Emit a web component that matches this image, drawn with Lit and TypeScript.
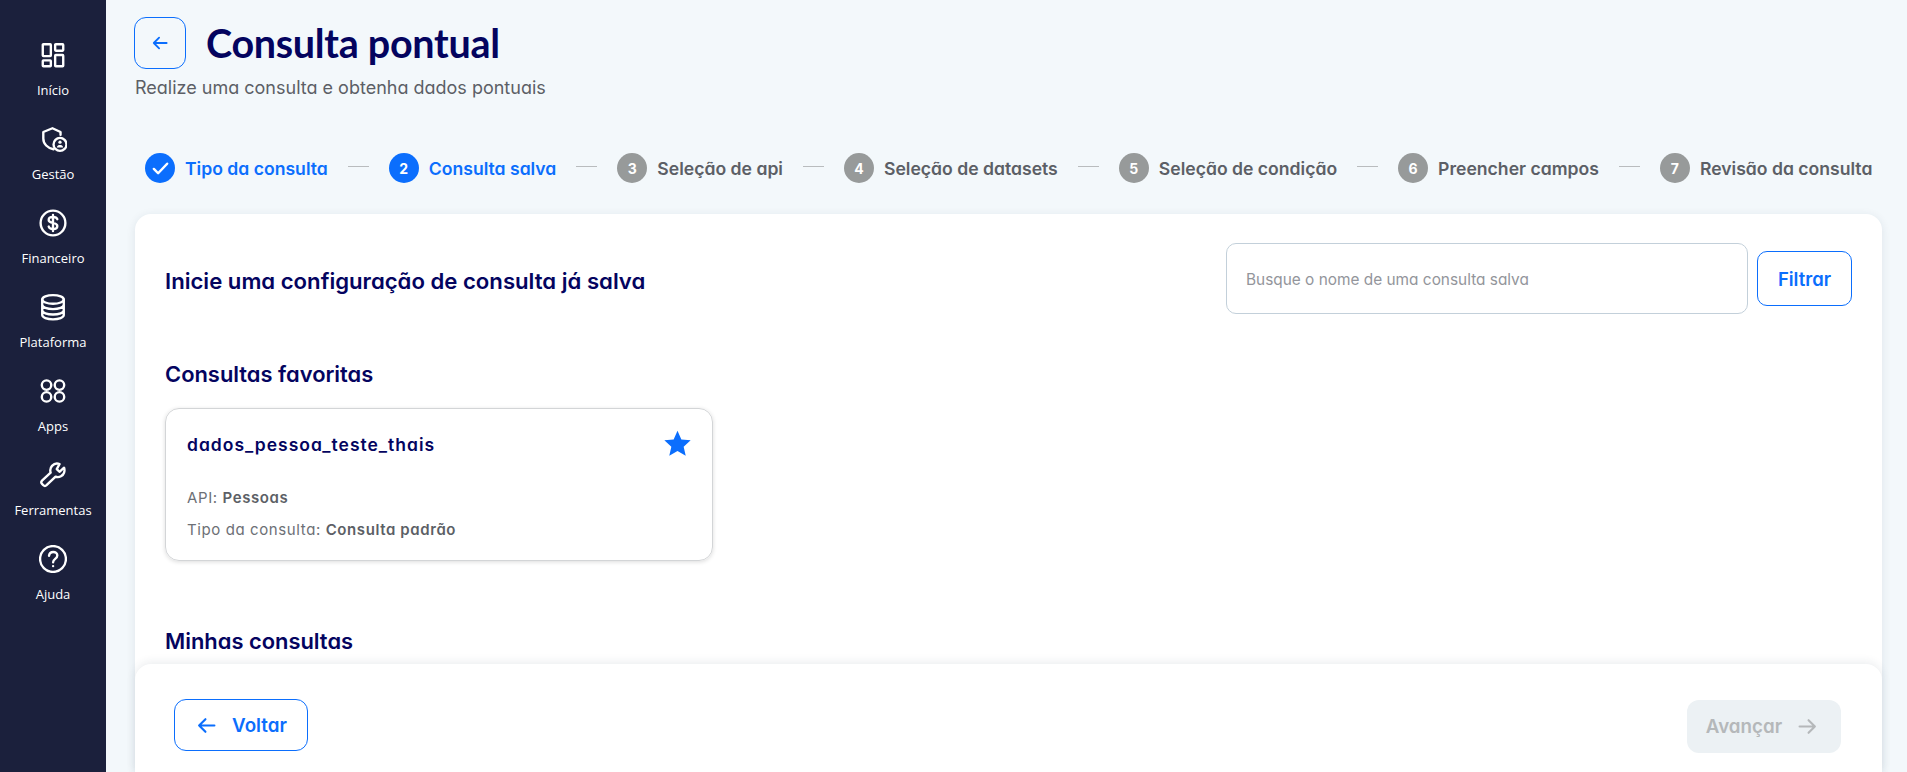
import { LitElement, html, css, svg } from "lit";
import { customElement } from "lit/decorators.js";

const icons: Record<string, unknown> = {
  home: svg`<rect x="3.500" y="3" width="7.500" height="11" rx=".6"/><rect x="15" y="3" width="7.500" height="6" rx=".6"/><rect x="3.500" y="18" width="7.500" height="5.500" rx=".6"/><rect x="15" y="13" width="7.500" height="10.500" rx=".6"/>`,
  shield: svg`<path d="M13.500 22.500C8 21.500 4 17.500 4 12.500V6.500L12.500 3l7.500 3.500V9"/><circle cx="19.500" cy="18" r="6"/><circle cx="19.500" cy="16" r="1.500" fill="currentColor" stroke="none"/><path d="M16.500 21c.5-2 1.500-2.500 3-2.500s2.500.5 3 2.500" fill="currentColor" stroke="none"/>`,
  money: svg`<circle cx="13" cy="13" r="11.500"/><path d="M17 9.500c-.5-1.500-2-2.200-4-2.200-2.300 0-4 1.100-4 2.800 0 3.800 8 1.800 8 5.600 0 1.800-1.800 2.900-4 2.900-2 0-3.600-.8-4-2.300M13 5.500v15"/>`,
  db: svg`<ellipse cx="13" cy="6" rx="10" ry="4"/><path d="M3 6v14.500c0 2.300 4.500 4 10 4s10-1.700 10-4V6M3 11c0 2.300 4.500 4 10 4s10-1.700 10-4M3 16c0 2.300 4.500 4 10 4s10-1.700 10-4"/>`,
  apps: svg`<circle cx="7" cy="7.500" r="4.400"/><circle cx="19" cy="7.500" r="4.400"/><circle cx="7" cy="18.500" r="4.400"/><circle cx="19" cy="18.500" r="4.400"/>`,
  tool: svg`<path d="M16.500 7.500l2.500 2.500 4.300-3.800c1 3.300-.2 6.600-2.900 8-2 1-3.800.8-5 .3L7 22.500c-1 1-2 1-3 0l-1.200-1.200c-1-1-1-2 0-3l8-7.500c-.6-2-.3-4.500 1.300-6.300 1.700-1.900 4.500-2.700 7-1.700z"/>`,
  help: svg`<circle cx="13" cy="13" r="12"/><path d="M9.300 10c.3-2.200 1.900-3.500 3.900-3.500 2.200 0 3.800 1.400 3.800 3.300 0 3-3.900 3.200-3.900 6.200"/><circle cx="13.100" cy="19.600" r="1.100" fill="currentColor" stroke="none"/>`,
};

const nav = [
  ["home", "Início"],
  ["shield", "Gestão"],
  ["money", "Financeiro"],
  ["db", "Plataforma"],
  ["apps", "Apps"],
  ["tool", "Ferramentas"],
  ["help", "Ajuda"],
];

const steps = [
  { n: "1", label: "Tipo da consulta", state: "done" },
  { n: "2", label: "Consulta salva", state: "active" },
  { n: "3", label: "Seleção de api", state: "" },
  { n: "4", label: "Seleção de datasets", state: "" },
  { n: "5", label: "Seleção de condição", state: "" },
  { n: "6", label: "Preencher campos", state: "" },
  { n: "7", label: "Revisão da consulta", state: "" },
];

const arrowLeft = html`<svg class="arrow" viewBox="0 0 18 18" fill="none" stroke="currentColor" stroke-width="2" stroke-linecap="round" stroke-linejoin="round"><path d="M16.500 9H2M8 3L2 9l6 6"/></svg>`;
const arrowRight = html`<svg class="arrow" viewBox="0 0 18 18" fill="none" stroke="currentColor" stroke-width="2" stroke-linecap="round" stroke-linejoin="round"><path d="M1.500 9H16M10 3l6 6-6 6"/></svg>`;

@customElement("app-root")
export class AppRoot extends LitElement {
  static styles = css`
    :host {
      display: flex;
      height: 772px;
      overflow: hidden;
      background: #f3f8fb;
      font-family: "Inter", "Liberation Sans", sans-serif;
      font-feature-settings: "cv11";
      color: #5c5f66;
    }
    .side {
      width: 106px;
      flex: none;
      background: #1b203c;
      color: #fff;
      display: flex;
      flex-direction: column;
      padding-top: 41px;
      box-sizing: border-box;
    }
    .nav {
      height: 84px;
      display: flex;
      flex-direction: column;
      align-items: center;
      gap: 12px;
    }
    .nav svg {
      width: 28px;
      height: 28px;
      fill: none;
      stroke: currentColor;
      stroke-width: 2.200;
      stroke-linecap: round;
      stroke-linejoin: round;
    }
    .nav span {
      font: 400 13px/17px "Open Sans", sans-serif;
      white-space: nowrap;
      padding-top: 1px;
    }
    .main {
      flex: 1;
      min-width: 0;
      position: relative;
      display: flex;
      flex-direction: column;
      padding: 17px 25px 0 29px;
      box-sizing: border-box;
    }
    .head {
      display: flex;
      align-items: center;
      gap: 20px;
      margin-left: -1px;
    }
    .back {
      width: 52px;
      height: 52px;
      box-sizing: border-box;
      border: 1px solid #0b6efd;
      border-radius: 12px;
      color: #0b6efd;
      display: flex;
      align-items: center;
      justify-content: center;
    }
    .back .arrow {
      width: 16px;
      height: 16px;
    }
    h1 {
      margin: 0;
      font: 700 39.500px/52px "Lato", sans-serif;
      color: #04045f;
      letter-spacing: -0.3px;
    }
    .sub {
      margin: 6px 0 0;
      font-size: 18px;
      line-height: 26px;
      font-weight: 400;
    }
    .steps {
      display: flex;
      align-items: center;
      gap: 20px;
      margin: 52px 0 0 10px;
      height: 30px;
      white-space: nowrap;
    }
    .step {
      display: flex;
      align-items: center;
      gap: 10px;
      font-size: 17.600px;
      font-weight: 600;
      color: #5c5f66;
    }
    .step.on {
      color: #0b6efd;
    }
    .dot {
      width: 30px;
      height: 30px;
      border-radius: 50%;
      background: #979a9a;
      color: #fff;
      font-size: 14px;
      font-weight: 700;
      display: flex;
      align-items: center;
      justify-content: center;
    }
    .on .dot {
      background: #0b6efd;
    }
    .dot svg {
      width: 19px;
      height: 19px;
    }
    .rule {
      width: 21px;
      height: 1px;
      background: #b9bcbe;
      margin-top: -3px;
    }
    .card {
      margin-top: 31px;
      flex: 1;
      min-height: 0;
      background: #fff;
      border-radius: 16px 16px 0 0;
      box-shadow: 0 2px 10px rgba(30, 50, 80, 0.1);
      padding: 29px 30px 0;
      overflow: hidden;
      box-sizing: border-box;
    }
    .top {
      display: flex;
      align-items: center;
      gap: 9px;
    }
    h2 {
      margin: 4px 0 0;
      flex: 1;
      font-size: 22.150px;
      line-height: 32px;
      font-weight: 600;
      color: #04045f;
    }
    .search {
      width: 522px;
      height: 71px;
      box-sizing: border-box;
      border: 1px solid #c3d0da;
      border-radius: 10px;
      padding: 1px 19px 0;
      display: flex;
      align-items: center;
      font-size: 15.400px;
      color: #93959b;
    }
    .filter {
      width: 95px;
      height: 55px;
      box-sizing: border-box;
      border: 1px solid #0b6efd;
      border-radius: 10px;
      color: #0b6efd;
      font-size: 18.500px;
      font-weight: 600;
      display: flex;
      align-items: center;
      justify-content: center;
    }
    h3 {
      margin: 0;
      font-size: 21.900px;
      line-height: 32px;
      font-weight: 600;
      color: #04045f;
    }
    .fav {
      margin-top: 44px;
    }
    .saved {
      margin-top: 18px;
      width: 548px;
      height: 153px;
      box-sizing: border-box;
      border: 1px solid #d3d5d7;
      border-radius: 14px;
      box-shadow: 0 1px 4px rgba(0, 0, 0, 0.14);
      padding: 21px 20px 0 21px;
    }
    .saved-top {
      display: flex;
      align-items: center;
      justify-content: space-between;
      height: 28px;
    }
    .saved-name {
      font-size: 17.500px;
      font-weight: 600;
      letter-spacing: 1px;
      color: #04045f;
    }
    .star {
      width: 29px;
      height: 29px;
      fill: #0b6efd;
      margin-top: -2px;
    }
    .meta {
      margin: 0;
      font-size: 15px;
      line-height: 20px;
      letter-spacing: 0.6px;
      color: #6d7076;
    }
    .meta b {
      font-weight: 600;
      color: #5c5f66;
    }
    .meta.a {
      margin-top: 30px;
    }
    .meta.b {
      margin-top: 12px;
    }
    .mine {
      margin-top: 64px;
    }
    .foot {
      position: absolute;
      left: 29px;
      right: 25px;
      bottom: 0;
      height: 108px;
      box-sizing: border-box;
      background: #fff;
      border-radius: 16px 16px 0 0;
      box-shadow: 0 -2px 10px rgba(30, 50, 80, 0.09);
      display: flex;
      justify-content: space-between;
      padding: 35px 41px 0 39px;
    }
    .btn {
      box-sizing: border-box;
      display: flex;
      align-items: center;
      justify-content: center;
      font-size: 18.800px;
      font-weight: 600;
      gap: 16px;
      border-radius: 12px;
    }
    .btn .arrow {
      width: 19px;
      height: 19px;
    }
    .prev {
      width: 134px;
      height: 52px;
      border: 1px solid #0b6efd;
      color: #0b6efd;
      padding-left: 2px;
    }
    .next {
      width: 154px;
      height: 53px;
      margin-top: 1px;
      background: #ecf1f4;
      color: #b5b8ba;
      padding-right: 5px;
    }
  `;

  render() {
    return html`
      <aside class="side">
        ${nav.map(
          ([k, t]) => html`<div class="nav">
            <svg viewBox="0 0 26 26">${icons[k]}</svg><span>${t}</span>
          </div>`
        )}
      </aside>
      <main class="main">
        <div class="head">
          <div class="back">${arrowLeft}</div>
          <h1>Consulta pontual</h1>
        </div>
        <p class="sub">Realize uma consulta e obtenha dados pontuais</p>
        <div class="steps">
          ${steps.map(
            (s, i) => html`
              ${i ? html`<div class="rule"></div>` : ""}
              <div class="step ${s.state ? "on" : ""}">
                <div class="dot">
                  ${s.state === "done"
                    ? html`<svg viewBox="0 0 20 20" fill="none" stroke="#fff" stroke-width="2.600" stroke-linecap="round" stroke-linejoin="round"><path d="M3 10.500l4.500 4.500L17 5"/></svg>`
                    : s.n}
                </div>
                <span>${s.label}</span>
              </div>
            `
          )}
        </div>
        <section class="card">
          <div class="top">
            <h2>Inicie uma configuração de consulta já salva</h2>
            <div class="search">Busque o nome de uma consulta salva</div>
            <div class="filter">Filtrar</div>
          </div>
          <h3 class="fav">Consultas favoritas</h3>
          <div class="saved">
            <div class="saved-top">
              <span class="saved-name">dados_pessoa_teste_thais</span>
              <svg class="star" viewBox="0 0 24 24"><path d="M12 1.500l3.200 7.100 7.700.8-5.800 5.200 1.700 7.600L12 18.300l-6.800 3.900 1.700-7.600L1.100 9.400l7.700-.8z"/></svg>
            </div>
            <p class="meta a">API: <b>Pessoas</b></p>
            <p class="meta b">Tipo da consulta: <b>Consulta padrão</b></p>
          </div>
          <h3 class="mine">Minhas consultas</h3>
        </section>
        <div class="foot">
          <div class="btn prev">${arrowLeft}<span>Voltar</span></div>
          <div class="btn next"><span>Avançar</span>${arrowRight}</div>
        </div>
      </main>
    `;
  }
}
